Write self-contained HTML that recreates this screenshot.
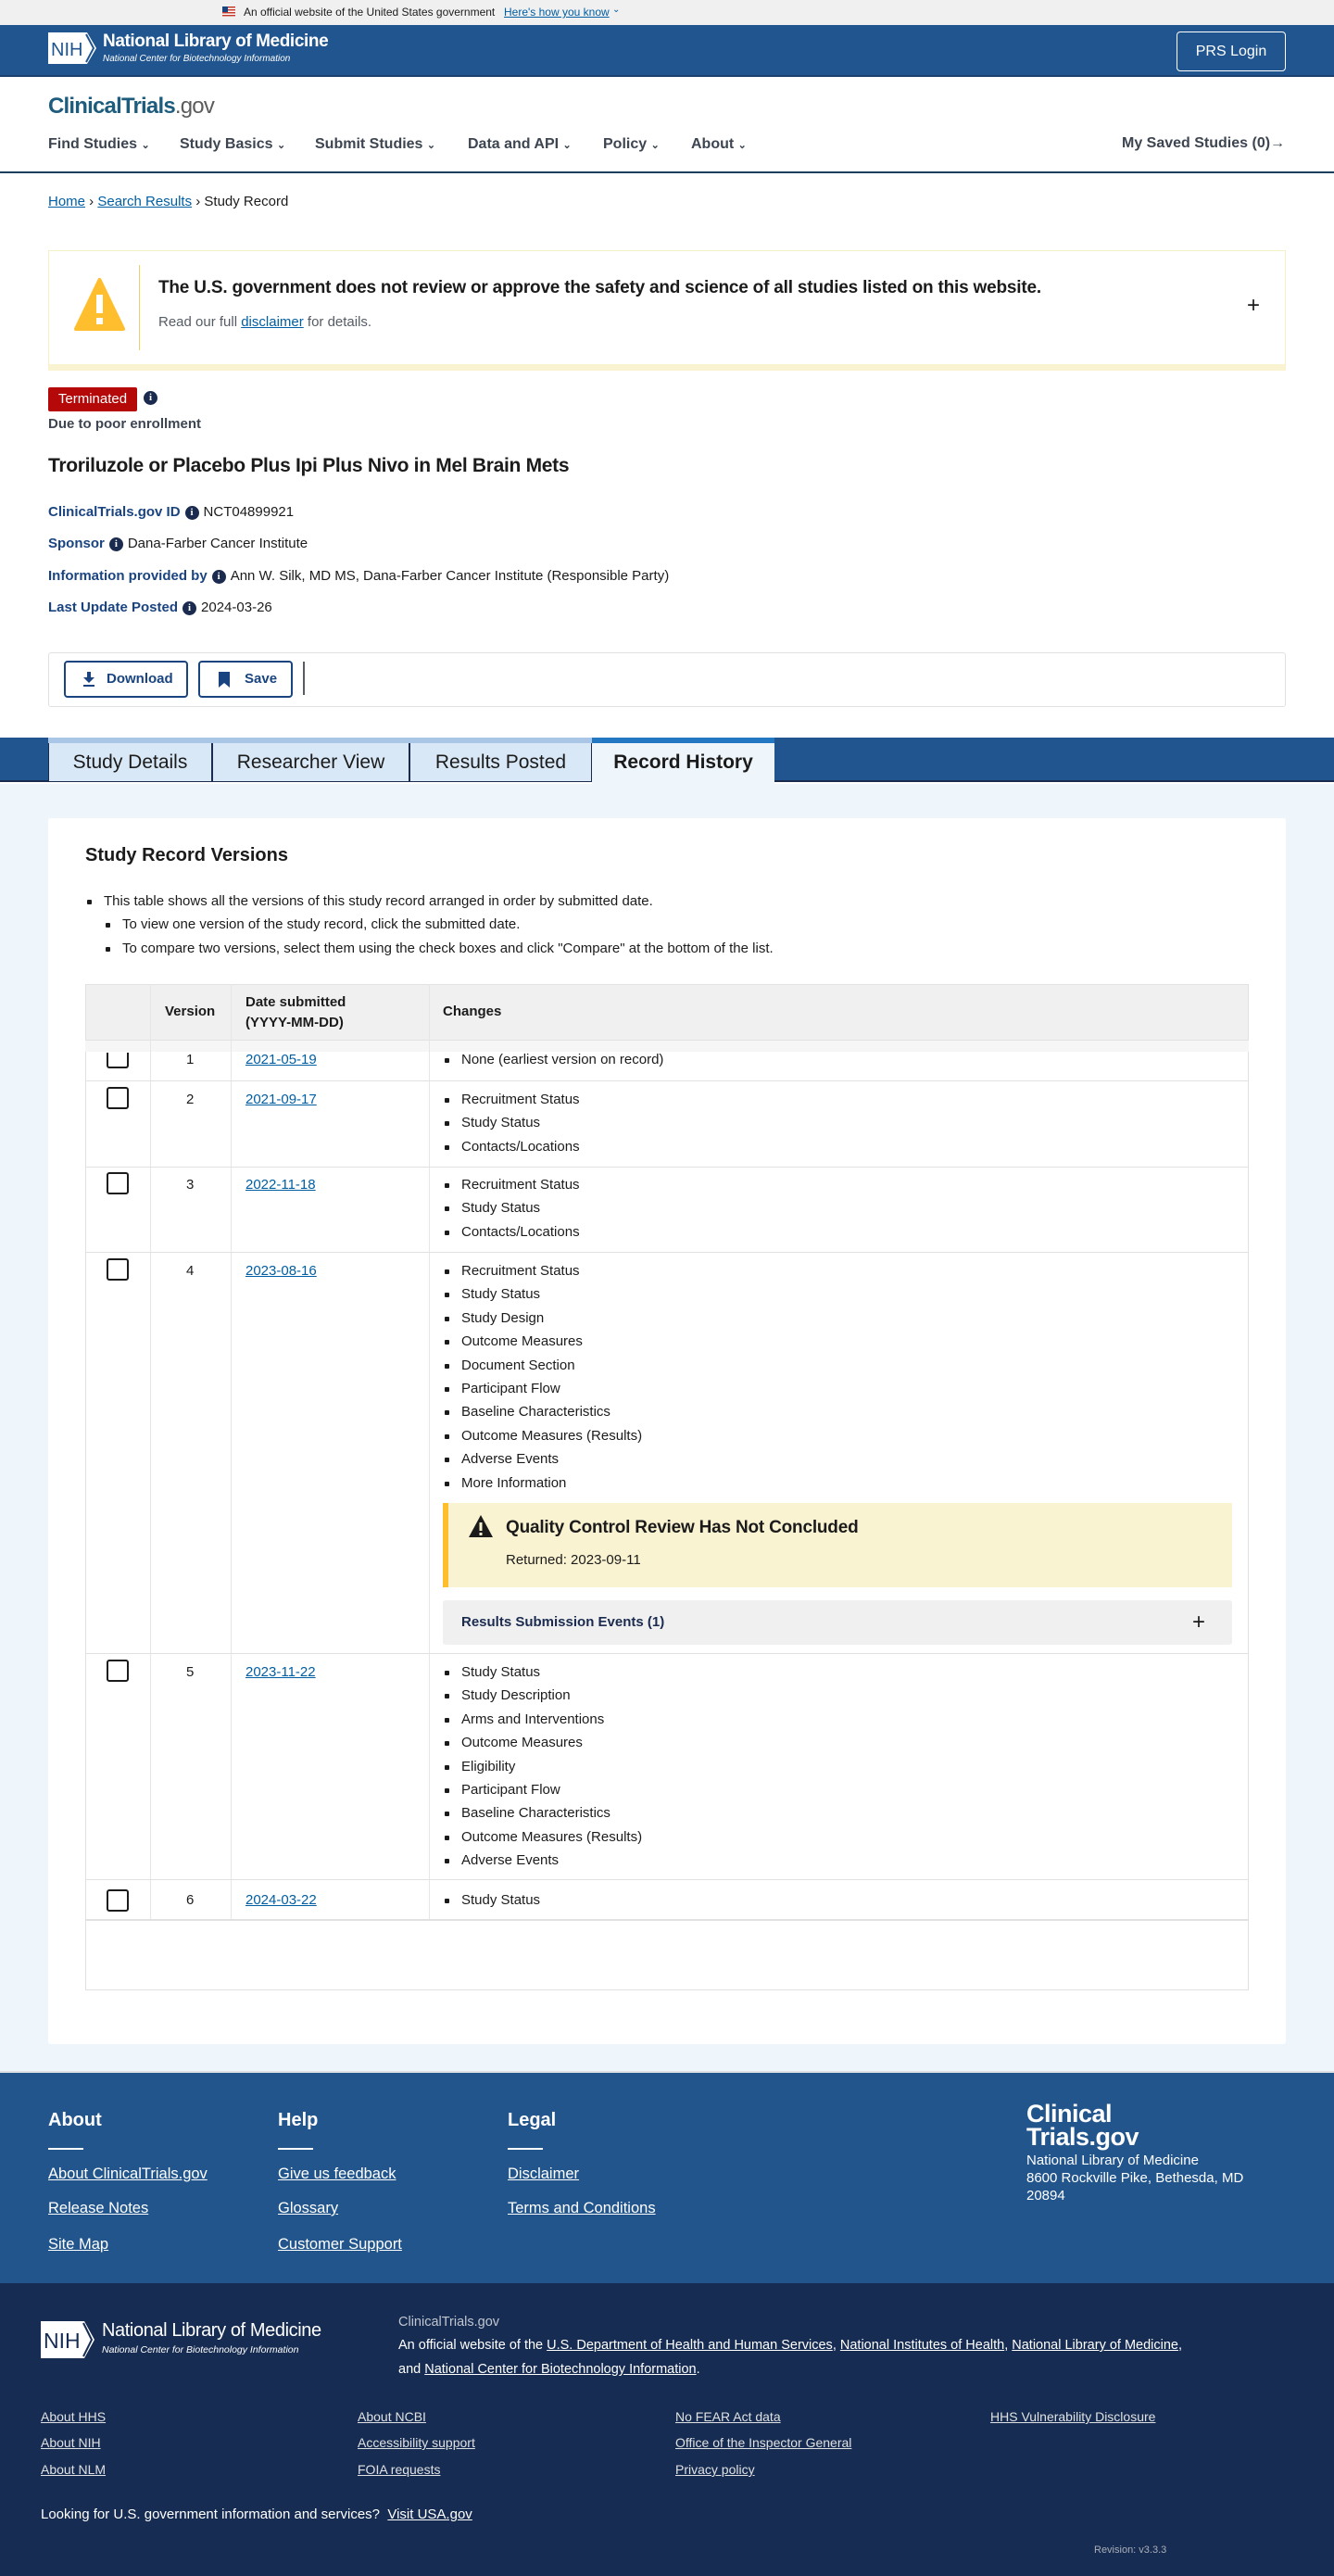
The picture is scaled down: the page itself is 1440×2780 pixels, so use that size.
<!DOCTYPE html>
<html><head><meta charset="utf-8">
<style>
*{box-sizing:border-box;margin:0;padding:0}
body{width:1440px;height:2780px;position:relative;font-family:"Liberation Sans",Arial,sans-serif;color:#1b1b1b;background:#fff;overflow:hidden}
.a{position:absolute;white-space:nowrap}
a,.lk{color:#005ea2;text-decoration:underline}
.navi{font-size:16px;font-weight:bold;color:#3d4551}
.info{display:inline-block;width:15px;height:15px;border-radius:50%;background:#1b2b4f;color:#fff;font-size:11px;font-weight:bold;text-align:center;line-height:15px;font-family:"Liberation Serif",serif;vertical-align:1px;margin:0 5px}
.lbl{color:#1a4480;font-weight:bold;font-size:15px}
.val{font-size:15px}
.tab{position:absolute;top:802px;height:42px;background:#d9e8f6;border:1px solid #1b2b4f;border-top:none;font-size:21px;text-align:center;line-height:42px;color:#1b1b1b}
.cb{position:absolute;width:24px;height:24px;border:2px solid #1b1b1b;border-radius:3px;background:#fff}
.cell{position:absolute;font-size:15px}
ul.ch{position:absolute;list-style:none;font-size:15px}
ul.ch li{height:25.4px;line-height:25.4px;position:relative;padding-left:20px}
ul.ch li:before{content:"";position:absolute;left:2px;top:11px;width:5px;height:5px;background:#1b1b1b;border-radius:1px}
.rowline{position:absolute;left:92px;width:1256px;height:1px;background:#dfe1e2}
.fl{color:#fff;text-decoration:underline;font-size:16.5px}
.dl{color:#dfe1e2;text-decoration:underline;font-size:14px}
</style></head><body>

<div class="a" style="left:0;top:0;width:1440px;height:27px;background:#f0f0f0"></div>
<div class="a" style="left:240px;top:7px;width:14px;height:11px;background:repeating-linear-gradient(#c0392b 0 1.5px,#fff 1.5px 3px)"><div style="width:6px;height:6px;background:#1a4480"></div></div>
<div class="a" style="left:263px;top:6px;font-size:12px;color:#1b1b1b">An official website of the United States government</div>
<div class="a lk" style="left:544px;top:6px;font-size:12px">Here's how you know</div>
<div class="a" style="left:661px;top:5px;font-size:10px;color:#005ea2">&#8964;</div>

<div class="a" style="left:0;top:27px;width:1440px;height:56px;background:#20558f;border-bottom:2px solid #1b3f6e"></div>
<svg class="a" style="left:52px;top:35px" width="54" height="34" viewBox="0 0 54 34"><path d="M0 0H42L52 17L42 34H0Z" fill="#fff"/><path d="M41 2L49 17L41 32" fill="none" stroke="#20558f" stroke-width="2"/><text x="3" y="25" font-family="Liberation Sans" font-size="20" fill="#20558f">NIH</text></svg>
<div class="a" style="left:111px;top:34px;font-size:19px;font-weight:bold;color:#fff;letter-spacing:-0.4px">National Library of Medicine</div>
<div class="a" style="left:111px;top:58px;font-size:10px;font-style:italic;color:#fff">National Center for Biotechnology Information</div>
<div class="a" style="left:1270px;top:34px;width:118px;height:43px;border:1px solid #fff;border-radius:4px;color:#fff;font-size:16px;text-align:center;line-height:41px">PRS Login</div>

<div class="a" style="left:52px;top:101px;font-size:24px;font-weight:bold;color:#1d5c7c;letter-spacing:-0.8px">ClinicalTrials<span style="color:#5c5c5c;font-weight:normal">.gov</span></div>
<div class="a navi" style="left:52px;top:147px">Find Studies <span style="font-size:11px">&#8964;</span></div>
<div class="a navi" style="left:194px;top:147px">Study Basics <span style="font-size:11px">&#8964;</span></div>
<div class="a navi" style="left:340px;top:147px">Submit Studies <span style="font-size:11px">&#8964;</span></div>
<div class="a navi" style="left:505px;top:147px">Data and API <span style="font-size:11px">&#8964;</span></div>
<div class="a navi" style="left:651px;top:147px">Policy <span style="font-size:11px">&#8964;</span></div>
<div class="a navi" style="left:746px;top:147px">About <span style="font-size:11px">&#8964;</span></div>
<div class="a navi" style="left:1211px;top:146px">My Saved Studies (0)&#8594;</div>
<div class="a" style="left:0;top:185px;width:1440px;height:2px;background:#1b3f5e"></div>

<div class="a" style="left:52px;top:209px;font-size:15px"><span class="lk">Home</span> &#8250; <span class="lk">Search Results</span> &#8250; Study Record</div>

<div class="a" style="left:52px;top:270px;width:1336px;height:130px;background:#fff;border:1px solid #f5f0c8;border-bottom:7px solid #faf3d1"></div>
<div class="a" style="left:150px;top:286px;width:1px;height:92px;background:#f0d060"></div>
<svg class="a" style="left:80px;top:300px" width="55" height="60" viewBox="0 0 55 60"><path d="M27.5 2L53 55H2Z" fill="#ffbe2e" stroke="#ffbe2e" stroke-width="4" stroke-linejoin="round"/><rect x="24" y="18" width="7" height="20" fill="#fff"/><rect x="24" y="43" width="7" height="7" fill="#fff"/></svg>
<div class="a" style="left:171px;top:300px;font-size:19px;font-weight:bold;letter-spacing:-0.2px">The U.S. government does not review or approve the safety and science of all studies listed on this website.</div>
<div class="a" style="left:171px;top:339px;font-size:15px;color:#565c65">Read our full <span class="lk">disclaimer</span> for details.</div>
<div class="a" style="left:1346px;top:318px;font-size:24px;line-height:24px">+</div>

<div class="a" style="left:52px;top:418px;width:96px;height:26px;background:#b50909;color:#fff;font-size:15px;line-height:26px;text-align:center;border-radius:2px">Terminated</div>
<div class="a" style="left:150px;top:420px"><span class="info">i</span></div>
<div class="a" style="left:52px;top:449px;font-size:15px;font-weight:bold;color:#3d4551">Due to poor enrollment</div>
<div class="a" style="left:52px;top:491px;font-size:21px;font-weight:bold;color:#1b1b1b;letter-spacing:-0.3px">Troriluzole or Placebo Plus Ipi Plus Nivo in Mel Brain Mets</div>
<div class="a" style="left:52px;top:544px"><span class="lbl">ClinicalTrials.gov ID</span><span class="info">i</span><span class="val">NCT04899921</span></div>
<div class="a" style="left:52px;top:578px"><span class="lbl">Sponsor</span><span class="info">i</span><span class="val">Dana-Farber Cancer Institute</span></div>
<div class="a" style="left:52px;top:613px"><span class="lbl">Information provided by</span><span class="info">i</span><span class="val">Ann W. Silk, MD MS, Dana-Farber Cancer Institute (Responsible Party)</span></div>
<div class="a" style="left:52px;top:647px"><span class="lbl">Last Update Posted</span><span class="info">i</span><span class="val">2024-03-26</span></div>

<div class="a" style="left:52px;top:704px;width:1336px;height:59px;border:1px solid #dfe1e2;border-radius:3px"></div>
<div class="a" style="left:69px;top:713px;width:134px;height:40px;border:2px solid #1a4480;border-radius:4px;color:#1a4480;font-size:15px;font-weight:bold;line-height:36px">
<svg style="position:absolute;left:18px;top:10px" width="14" height="16" viewBox="0 0 14 16"><path d="M5 0H9V6H13L7 12L1 6H5Z M1 14H13V16H1Z" fill="#1a4480"/></svg><span style="margin-left:44px">Download</span></div>
<div class="a" style="left:214px;top:713px;width:102px;height:40px;border:2px solid #1a4480;border-radius:4px;color:#1a4480;font-size:15px;font-weight:bold;line-height:36px">
<svg style="position:absolute;left:20px;top:10px" width="12" height="17" viewBox="0 0 12 17"><path d="M0 0H12V17L6 12L0 17Z" fill="#1a4480"/></svg><span style="margin-left:48px">Save</span></div>
<div class="a" style="left:327px;top:714px;width:2px;height:36px;background:#565c65"></div>

<div class="a" style="left:0;top:796px;width:1440px;height:48px;background:#20558f;border-bottom:2px solid #1b2b4f"></div>
<div class="a" style="left:52px;top:796px;width:784px;height:6px;background:#a9c6e6"></div>
<div class="tab" style="left:52px;width:177px">Study Details</div>
<div class="tab" style="left:229px;width:213px">Researcher View</div>
<div class="tab" style="left:442px;width:197px">Results Posted</div>
<div class="a" style="left:639px;top:796px;width:197px;height:50px;background:#eff6fb;border-top:6px solid #2378c3;font-size:21px;font-weight:bold;text-align:center;line-height:42px">Record History</div>

<div class="a" style="left:0;top:846px;width:1440px;height:1391px;background:#eff6fb"></div>
<div class="a" style="left:52px;top:883px;width:1336px;height:1323px;background:#fff;border-radius:3px"></div>
<div class="a" style="left:92px;top:912px;font-size:20px;font-weight:bold">Study Record Versions</div>
<ul class="ch" style="left:92px;top:960px;font-size:15px">
<li>This table shows all the versions of this study record arranged in order by submitted date.</li>
<li style="margin-left:20px">To view one version of the study record, click the submitted date.</li>
<li style="margin-left:20px">To compare two versions, select them using the check boxes and click "Compare" at the bottom of the list.</li>
</ul>

<div class="a" style="left:92px;top:1062px;width:1256px;height:1086px;border:1px solid #dfe1e2;background:#fff"></div>
<div class="a" style="left:92px;top:1062px;width:1256px;height:61px;background:#f0f0f0;border:1px solid #dfe1e2"></div>
<div class="a" style="left:92px;top:1123px;width:1256px;height:12px;background:#f6f6f6"></div>
<div class="a" style="left:162px;top:1062px;width:1px;height:1010px;background:#e6e6e6"></div>
<div class="a" style="left:249px;top:1062px;width:1px;height:1010px;background:#e6e6e6"></div>
<div class="a" style="left:463px;top:1062px;width:1px;height:1010px;background:#e6e6e6"></div>
<div class="cell" style="left:178px;top:1083px;font-weight:bold">Version</div>
<div class="cell" style="left:265px;top:1071px;font-weight:bold;line-height:22px">Date submitted<br>(YYYY-MM-DD)</div>
<div class="cell" style="left:478px;top:1083px;font-weight:bold">Changes</div>

<div class="cb" style="left:115px;top:1136px;height:17px;border-top:none;border-radius:0 0 3px 3px"></div>
<div class="cell" style="left:201px;top:1135px">1</div>
<div class="cell lk" style="left:265px;top:1135px">2021-05-19</div>
<ul class="ch" style="left:478px;top:1131px"><li>None (earliest version on record)</li></ul>
<div class="rowline" style="top:1166px"></div>
<div class="cb" style="left:115px;top:1173px"></div>
<div class="cell" style="left:201px;top:1178px">2</div>
<div class="cell lk" style="left:265px;top:1178px">2021-09-17</div>
<ul class="ch" style="left:478px;top:1174px"><li>Recruitment Status</li><li>Study Status</li><li>Contacts/Locations</li></ul>
<div class="rowline" style="top:1259px"></div>
<div class="cb" style="left:115px;top:1265px"></div>
<div class="cell" style="left:201px;top:1270px">3</div>
<div class="cell lk" style="left:265px;top:1270px">2022-11-18</div>
<ul class="ch" style="left:478px;top:1266px"><li>Recruitment Status</li><li>Study Status</li><li>Contacts/Locations</li></ul>
<div class="rowline" style="top:1351px"></div>
<div class="cb" style="left:115px;top:1358px"></div>
<div class="cell" style="left:201px;top:1363px">4</div>
<div class="cell lk" style="left:265px;top:1363px">2023-08-16</div>
<ul class="ch" style="left:478px;top:1359px"><li>Recruitment Status</li><li>Study Status</li><li>Study Design</li><li>Outcome Measures</li><li>Document Section</li><li>Participant Flow</li><li>Baseline Characteristics</li><li>Outcome Measures (Results)</li><li>Adverse Events</li><li>More Information</li></ul>
<div class="a" style="left:478px;top:1622px;width:852px;height:91px;background:#faf3d1;border-left:6px solid #ffbe2e"></div>
<svg class="a" style="left:505px;top:1634px" width="28" height="26" viewBox="0 0 28 26"><path d="M14 1L27 25H1Z" fill="#1b1b1b"/><rect x="12.5" y="9" width="3" height="9" fill="#faf3d1"/><rect x="12.5" y="20" width="3" height="3" fill="#faf3d1"/></svg>
<div class="a" style="left:546px;top:1638px;font-size:19px;font-weight:bold;letter-spacing:-0.2px">Quality Control Review Has Not Concluded</div>
<div class="a" style="left:546px;top:1675px;font-size:15px">Returned: 2023-09-11</div>
<div class="a" style="left:478px;top:1727px;width:852px;height:48px;background:#f0f0f0;border-radius:3px"></div>
<div class="a" style="left:498px;top:1742px;font-size:15px;font-weight:bold;color:#1b2b4f">Results Submission Events (1)</div>
<div class="a" style="left:1287px;top:1739px;font-size:24px;line-height:24px">+</div>
<div class="rowline" style="top:1784px"></div>
<div class="cb" style="left:115px;top:1791px"></div>
<div class="cell" style="left:201px;top:1796px">5</div>
<div class="cell lk" style="left:265px;top:1796px">2023-11-22</div>
<ul class="ch" style="left:478px;top:1792px"><li>Study Status</li><li>Study Description</li><li>Arms and Interventions</li><li>Outcome Measures</li><li>Eligibility</li><li>Participant Flow</li><li>Baseline Characteristics</li><li>Outcome Measures (Results)</li><li>Adverse Events</li></ul>
<div class="rowline" style="top:2028px"></div>
<div class="cb" style="left:115px;top:2039px"></div>
<div class="cell" style="left:201px;top:2042px">6</div>
<div class="cell lk" style="left:265px;top:2042px">2024-03-22</div>
<ul class="ch" style="left:478px;top:2038px"><li>Study Status</li></ul>
<div class="rowline" style="top:2071px;height:2px"></div>

<div class="a" style="left:0;top:2235px;width:1440px;height:2px;background:#dfe1e2"></div>
<div class="a" style="left:0;top:2237px;width:1440px;height:227px;background:#21558c"></div>
<div class="a" style="left:52px;top:2277px;font-size:20px;font-weight:bold;color:#fff">About</div>
<div class="a" style="left:300px;top:2277px;font-size:20px;font-weight:bold;color:#fff">Help</div>
<div class="a" style="left:548px;top:2277px;font-size:20px;font-weight:bold;color:#fff">Legal</div>
<div class="a" style="left:52px;top:2318px;width:38px;height:2px;background:#fff"></div>
<div class="a" style="left:300px;top:2318px;width:38px;height:2px;background:#fff"></div>
<div class="a" style="left:548px;top:2318px;width:38px;height:2px;background:#fff"></div>
<div class="a fl" style="left:52px;top:2337px">About ClinicalTrials.gov</div>
<div class="a fl" style="left:52px;top:2374px">Release Notes</div>
<div class="a fl" style="left:52px;top:2413px">Site Map</div>
<div class="a fl" style="left:300px;top:2337px">Give us feedback</div>
<div class="a fl" style="left:300px;top:2374px">Glossary</div>
<div class="a fl" style="left:300px;top:2413px">Customer Support</div>
<div class="a fl" style="left:548px;top:2337px">Disclaimer</div>
<div class="a fl" style="left:548px;top:2374px">Terms and Conditions</div>
<div class="a" style="left:1108px;top:2269px;font-size:27px;font-weight:bold;color:#fff;line-height:25px;letter-spacing:-0.5px">Clinical<br>Trials.gov</div>
<div class="a" style="left:1108px;top:2322px;font-size:15px;color:#fff;line-height:19px">National Library of Medicine<br>8600 Rockville Pike, Bethesda, MD<br>20894</div>

<div class="a" style="left:0;top:2464px;width:1440px;height:316px;background:#172c52"></div>
<svg class="a" style="left:44px;top:2505px" width="60" height="40" viewBox="0 0 60 40"><path d="M0 0H47L58 20L47 40H0Z" fill="#fff"/><path d="M46 2L55 20L46 38" fill="none" stroke="#172c52" stroke-width="2"/><text x="3" y="29" font-family="Liberation Sans" font-size="23" fill="#172c52">NIH</text></svg>
<div class="a" style="left:110px;top:2504px;font-size:20px;color:#fff;letter-spacing:-0.4px">National Library of Medicine</div>
<div class="a" style="left:110px;top:2530px;font-size:10.5px;font-style:italic;color:#fff">National Center for Biotechnology Information</div>
<div class="a" style="left:430px;top:2498px;font-size:14.5px;color:#c0c6d0">ClinicalTrials.gov</div>
<div class="a" style="left:430px;top:2523px;font-size:14.5px;color:#fff">An official website of the <span class="fl" style="font-size:14.5px">U.S. Department of Health and Human Services</span>, <span class="fl" style="font-size:14.5px">National Institutes of Health</span>, <span class="fl" style="font-size:14.5px">National Library of Medicine</span>,</div>
<div class="a" style="left:430px;top:2549px;font-size:14.5px;color:#fff">and <span class="fl" style="font-size:14.5px">National Center for Biotechnology Information</span>.</div>
<div class="a dl" style="left:44px;top:2600px">About HHS</div>
<div class="a dl" style="left:44px;top:2628px">About NIH</div>
<div class="a dl" style="left:44px;top:2657px">About NLM</div>
<div class="a dl" style="left:386px;top:2600px">About NCBI</div>
<div class="a dl" style="left:386px;top:2628px">Accessibility support</div>
<div class="a dl" style="left:386px;top:2657px">FOIA requests</div>
<div class="a dl" style="left:729px;top:2600px">No FEAR Act data</div>
<div class="a dl" style="left:729px;top:2628px">Office of the Inspector General</div>
<div class="a dl" style="left:729px;top:2657px">Privacy policy</div>
<div class="a dl" style="left:1069px;top:2600px">HHS Vulnerability Disclosure</div>
<div class="a" style="left:44px;top:2705px;font-size:15px;color:#fff">Looking for U.S. government information and services?&nbsp; <span class="fl" style="font-size:15px">Visit USA.gov</span></div>
<div class="a" style="left:1181px;top:2746px;font-size:11px;color:#a9aeb8">Revision: v3.3.3</div>
</body></html>
